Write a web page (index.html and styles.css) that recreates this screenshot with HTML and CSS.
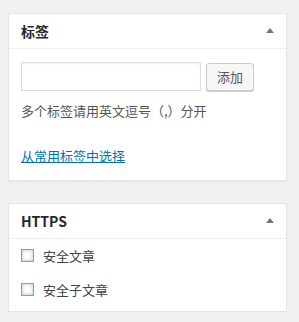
FILE: index.html
```html
<!DOCTYPE html>
<html lang="zh">
<head>
<meta charset="utf-8">
<link rel="stylesheet" href="styles.css">
</head>
<body>
<div class="wrap">
  <div class="postbox">
    <div class="hndle"><h2>标签</h2><span class="toggle"></span></div>
    <div class="inside">
      <div class="tagadd">
        <input class="newtag" type="text">
        <button class="button">添加</button>
      </div>
      <p class="howto">多个标签请用英文逗号（,）分开</p>
      <p class="cloud"><a href="#">从常用标签中选择</a></p>
    </div>
  </div>
  <div class="postbox">
    <div class="hndle"><h2>HTTPS</h2><span class="toggle"></span></div>
    <div class="inside list">
      <label class="row"><span class="cb"></span>安全文章</label>
      <label class="row"><span class="cb"></span>安全子文章</label>
    </div>
  </div>
</div>
</body>
</html>
```

FILE: styles.css
```css
* { box-sizing: border-box; }
body {
  margin: 0;
  background: #f1f1f1;
  font-family: "Noto Sans CJK SC", "Noto Sans", sans-serif;
  font-size: 13px;
  color: #444;
}
.wrap {
  padding: 13px 12px 0 8px;
  display: flex;
  flex-direction: column;
  gap: 22px;
}
.postbox {
  width: 279px;
  background: #fff;
  border: 1px solid #e5e5e5;
  box-shadow: 0 1px 1px rgba(0,0,0,.04);
}
.hndle {
  height: 35px;
  border-bottom: 1px solid #eee;
  display: flex;
  align-items: center;
  justify-content: space-between;
  padding: 0 12px 0 12px;
}
.hndle h2 {
  margin: 0;
  font-size: 14px;
  font-weight: 700;
  color: #23282d;
  line-height: 1;
}
.toggle {
  width: 0; height: 0;
  border-left: 4px solid transparent;
  border-right: 4px solid transparent;
  border-bottom: 5px solid #72777c;
  margin-right: 0;
  margin-bottom: 2px;
}
.inside { padding: 13px 12px 14px; }
.tagadd { display: flex; gap: 5px; align-items: center; }
.newtag {
  width: 180px;
  height: 29px;
  margin: 0;
  border: 1px solid #ddd;
  box-shadow: inset 0 1px 2px rgba(0,0,0,.07);
  background: #fff;
}
.button {
  width: 48px;
  height: 28px;
  margin: 0;
  padding: 0;
  border: 1px solid #ccc;
  border-radius: 3px;
  background: #f7f7f7;
  box-shadow: 0 1px 0 #ccc;
  color: #555;
  font-family: inherit;
  font-size: 13px;
}
.howto {
  margin: 10px 0 0;
  line-height: 20px;
  color: #555;
}
.cloud { margin: 25px 0 0; line-height: 20px; }
.cloud a { color: #0073aa; text-decoration: underline; }
.list { padding: 6px 12px 12px; display: flex; flex-direction: column; gap: 14px; }
.row { display: flex; align-items: center; height: 20px; color: #444; }
.cb {
  width: 13px; height: 13px;
  border: 1px solid #9a9a9a;
  background: #fff;
  box-shadow: inset 0 0 3px 1px #d6d6d6;
  margin-right: 9px;
}
```
